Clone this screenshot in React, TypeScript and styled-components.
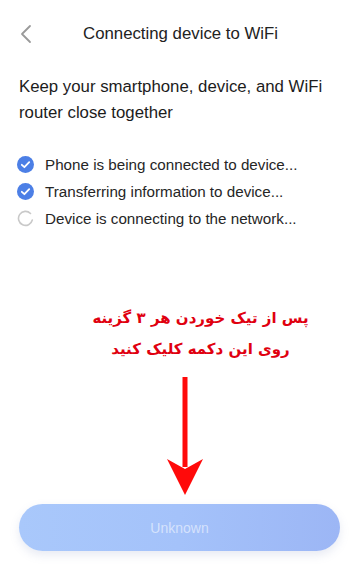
import styled, { createGlobalStyle } from "styled-components";

const GlobalStyle = createGlobalStyle`
  html, body {
    margin: 0;
    padding: 0;
    background: #ffffff;
  }
  body {
    font-family: "Liberation Sans", Arial, sans-serif;
    color: #1f1f1f;
  }
`;

const Screen = styled.div`
  width: 361px;
  height: 575px;
  display: flex;
  flex-direction: column;
  overflow: hidden;
  background: #fff;
`;

const Header = styled.div`
  height: 67px;
  display: flex;
  align-items: center;
  position: relative;
  justify-content: center;
`;

const BackButton = styled.button`
  position: absolute;
  left: 14px;
  top: 22px;
  width: 24px;
  height: 24px;
  border: none;
  background: none;
  padding: 0;
  display: flex;
  align-items: center;
  justify-content: center;
`;

const Title = styled.h1`
  margin: 0;
  font-size: 16.8px;
  font-weight: 400;
  color: #222;
`;

const Lead = styled.p`
  margin: 7px 19px 0;
  font-size: 16.8px;
  line-height: 26px;
  color: #1c1c1c;
`;

const Steps = styled.ul`
  list-style: none;
  margin: 29px 0 0;
  padding: 0 0 0 17px;
  display: flex;
  flex-direction: column;
  gap: 9px;
`;

const Step = styled.li`
  display: flex;
  align-items: center;
  gap: 11px;
  height: 18px;
  font-size: 15.2px;
  color: #262626;
`;

const Note = styled.div`
  margin-top: 76px;
  direction: rtl;
  text-align: center;
  font-family: "DejaVu Sans", "Noto Sans", sans-serif;
  font-weight: 700;
  font-size: 15px;
  line-height: 31px;
  color: #e0000f;
  padding: 0 0 0 40px;
`;

const ArrowWrap = styled.div`
  display: flex;
  justify-content: center;
  margin-top: 12px;
  padding-left: 9px;
`;

const Footer = styled.div`
  margin-top: auto;
  padding: 0 21px 24px 19px;
`;

const PrimaryButton = styled.button`
  width: 100%;
  height: 47px;
  border: none;
  border-radius: 24px;
  background: linear-gradient(90deg, #a9c8fb 0%, #a4c2fa 50%, #9cb6f5 100%);
  box-shadow: 0 4px 10px rgba(120, 140, 190, 0.18);
  color: rgba(255, 255, 255, 0.55);
  font-family: "Liberation Sans", Arial, sans-serif;
  font-size: 14px;
`;

function CheckIcon() {
  return (
    <svg width="17" height="17" viewBox="0 0 17 17">
      <circle cx="8.5" cy="8.5" r="8.5" fill="#4c7fe6" />
      <path d="M4.8 8.8 L7.4 11.2 L12.2 6.2" stroke="#fff" strokeWidth="1.8" fill="none" strokeLinecap="round" strokeLinejoin="round" />
    </svg>
  );
}

function SpinnerIcon() {
  return (
    <svg width="17" height="17" viewBox="0 0 17 17">
      <path d="M13.5 3.5 A7 7 0 1 0 15.3 10" stroke="#c9c9c9" strokeWidth="1.6" fill="none" strokeLinecap="round" />
    </svg>
  );
}

function DownArrow() {
  return (
    <svg width="40" height="120" viewBox="0 0 40 120">
      <rect x="17.5" y="0" width="5" height="90" fill="#ff0a0a" />
      <path d="M2 82 L20 118 L38 82 L20 92 Z" fill="#ff0a0a" />
    </svg>
  );
}

const steps = [
  { label: "Phone is being connected to device...", done: true },
  { label: "Transferring information to device...", done: true },
  { label: "Device is connecting to the network...", done: false },
];

export default function App() {
  return (
    <>
      <GlobalStyle />
      <Screen>
        <Header>
          <BackButton aria-label="back">
            <svg width="12" height="20" viewBox="0 0 12 20">
              <path d="M10 2 L2 10 L10 18" stroke="#9a9a9a" strokeWidth="1.8" fill="none" strokeLinecap="round" strokeLinejoin="round" />
            </svg>
          </BackButton>
          <Title>Connecting device to WiFi</Title>
        </Header>
        <Lead>
          Keep your smartphone, device, and WiFi router close together
        </Lead>
        <Steps>
          {steps.map((s) => (
            <Step key={s.label}>
              {s.done ? <CheckIcon /> : <SpinnerIcon />}
              {s.label}
            </Step>
          ))}
        </Steps>
        <Note>
          پس از تیک خوردن هر ۳ گزینه
          <br />
          روی این دکمه کلیک کنید
        </Note>
        <ArrowWrap>
          <DownArrow />
        </ArrowWrap>
        <Footer>
          <PrimaryButton>Unknown</PrimaryButton>
        </Footer>
      </Screen>
    </>
  );
}
